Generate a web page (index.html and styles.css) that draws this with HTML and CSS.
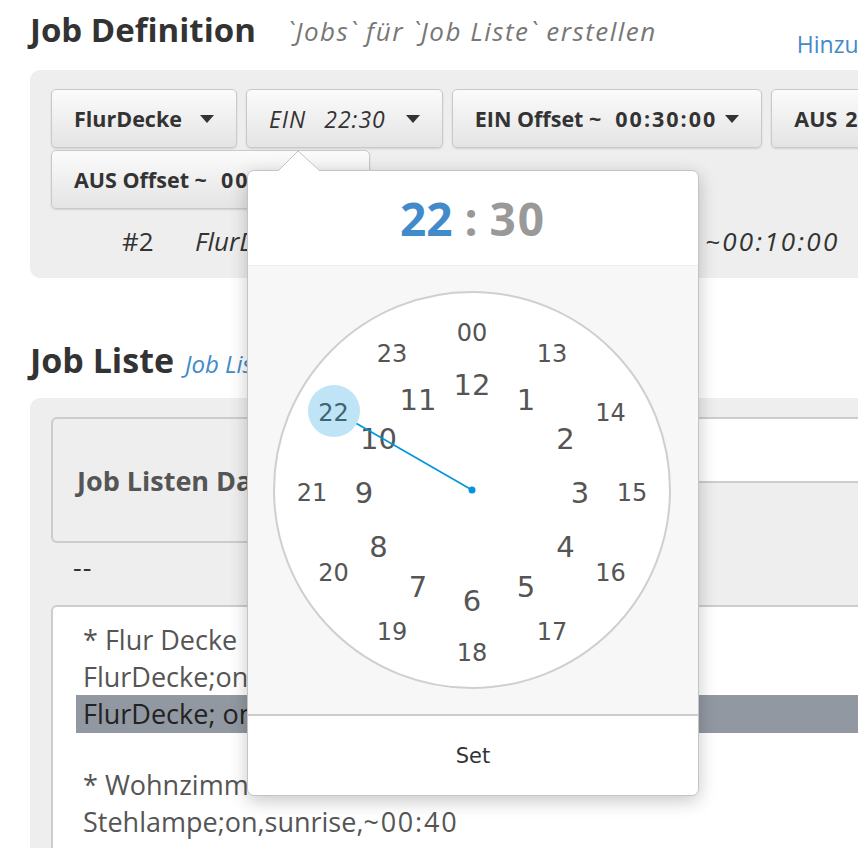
FILE: index.html
```html
<!DOCTYPE html>
<html lang="de">
<head>
<meta charset="utf-8">
<title>Job Definition</title>
<link rel="stylesheet" href="styles.css">
</head>
<body>
<div class="page">
  <div class="head">
    <h1 class="title">Job Definition</h1>
    <span class="subtitle">`Jobs` für `Job Liste` erstellen</span>
    <a class="add">Hinzufügen</a>
  </div>

  <div class="panel def">
    <div class="btns">
      <button class="btn"><span class="lbl">FlurDecke</span><span class="caret"></span></button>
      <button class="btn ital"><span class="lbl">EIN<span class="sp"></span>22:30</span><span class="caret"></span></button>
      <button class="btn tight"><span class="lbl">EIN Offset ~<span class="sp2"></span><span class="dg">00:30:00</span></span><span class="caret"></span></button>
      <button class="btn"><span class="lbl">AUS<span class="sp sm"></span><span class="dg">23:00</span></span><span class="caret"></span></button>
      <button class="btn wide"><span class="lbl">AUS Offset ~<span class="sp2"></span><span class="dg">00:10:00</span></span><span class="caret"></span></button>
    </div>
    <div class="jobline">
      <span class="num">#2</span>
      <span class="job mid">FlurDecke&nbsp;&nbsp; EIN 22:30~00:30:00 &nbsp; AUS 23:00</span>
      <span class="job dg2">~00:10:00</span>
    </div>
  </div>

  <div class="head2">
    <h2 class="title2">Job Liste</h2>
    <span class="sub2">Job Liste bearbeiten</span>
  </div>

  <div class="panel list">
    <div class="filerow">
      <div class="filelabel">Job Listen Datei</div>
      <div class="fileinput"></div>
    </div>
    <div class="dash">--</div>
    <div class="textbox">
      <div class="ln">* Flur Decke</div>
      <div class="ln">FlurDecke;on,22:30,~00:30:00</div>
      <div class="ln sel">FlurDecke; on,22:30,~00:30:00</div>
      <div class="ln blank"></div>
      <div class="ln">* Wohnzimmer</div>
      <div class="ln">Stehlampe;on,sunrise,<span class="dg3">~00:40</span></div>
    </div>
  </div>

  <div class="popover">
    <svg class="arrow" width="44" height="22" viewBox="0 0 44 22">
      <polygon points="1,21 21,1 43,21" fill="#fff"/>
      <polyline points="1,21 21,1 43,21" fill="none" stroke="#c4c4c4" stroke-width="1"/>
    </svg>
    <div class="pop-title"><span class="hh">22</span><span class="colon"> : </span><span class="mm">30</span></div>
    <div class="pop-body">
      <svg class="dial" width="398" height="398" viewBox="0 0 398 398">
        <circle cx="199" cy="199" r="198" fill="#fff" stroke="#cfcfcf" stroke-width="2"/>
        <g class="outer">
          <text x="199" y="42">00</text>
          <text x="279" y="63.4">13</text>
          <text x="337.6" y="122">14</text>
          <text x="359" y="202">15</text>
          <text x="337.6" y="282">16</text>
          <text x="279" y="340.6">17</text>
          <text x="199" y="362">18</text>
          <text x="119" y="340.6">19</text>
          <text x="60.4" y="282">20</text>
          <text x="39" y="202">21</text>
          <text x="60.4" y="122">22</text>
          <text x="119" y="63.4">23</text>
        </g>
        <g class="inner">
          <text x="199" y="94">12</text>
          <text x="253" y="108.5">1</text>
          <text x="292.5" y="148">2</text>
          <text x="307" y="202">3</text>
          <text x="292.5" y="256">4</text>
          <text x="253" y="295.5">5</text>
          <text x="199" y="310">6</text>
          <text x="145" y="295.5">7</text>
          <text x="105.5" y="256">8</text>
          <text x="91" y="202">9</text>
          <text x="105.5" y="148">10</text>
          <text x="145" y="108.5">11</text>
        </g>
        <circle cx="61" cy="120" r="26" fill="rgba(0,149,221,0.25)"/>
        <line x1="199" y1="199" x2="83.5" y2="132.5" stroke="#0095dd" stroke-width="1.6"/>
        <circle cx="199" cy="199" r="3.5" fill="#0095dd"/>
      </svg>
    </div>
    <div class="pop-foot">Set</div>
  </div>
</div>
</body>
</html>
```

FILE: styles.css
```css
html, body {
  margin: 0;
  padding: 0;
  overflow: hidden;
  background: #fff;
}

body {
  font-family: "Open Sans", "Liberation Sans", sans-serif;
  color: #333;
}

.page {
  position: relative;
  width: 1100px;
  padding-left: 30px;
  padding-top: 10px;
}

/* ---------- header ---------- */
.head {
  display: flex;
  align-items: flex-start;
  height: 40px;
  margin-bottom: 20px;
  white-space: nowrap;
}

.title {
  margin: 0;
  font-size: 33px;
  font-weight: 700;
  line-height: 40px;
  color: #333;
}

.subtitle {
  margin-left: 31px;
  font-size: 26px;
  letter-spacing: 1.5px;
  font-style: italic;
  line-height: 40px;
  padding-top: 1px;
  color: #777;
}

.add {
  margin-left: 140px;
  margin-top: 19px;
  font-size: 23px;
  line-height: 30px;
  color: #428bca;
}

/* ---------- panels ---------- */
.panel {
  background: #eeeeee;
  border-radius: 10px;
  padding: 19px 21px 21px;
}

.btns {
  display: flex;
  flex-wrap: wrap;
  column-gap: 9px;
  row-gap: 2px;
}

.btn {
  display: flex;
  align-items: center;
  gap: 18px;
  height: 59px;
  padding: 0 22px;
  border: 1px solid #c9c9c9;
  border-radius: 5px;
  background: linear-gradient(#fbfbfb, #e4e4e4);
  box-shadow: 0 1px 2px rgba(0, 0, 0, 0.12);
  font-family: "Open Sans", "Liberation Sans", sans-serif;
  font-size: 21.5px;
  font-weight: 700;
  color: #333;
  white-space: nowrap;
}

.btn.ital {
  font-style: italic;
  font-weight: 400;
  font-size: 23px;
  letter-spacing: 1px;
  gap: 20px;
}

.btn.ital .sp {
  width: 18px;
}

.btn.tight {
  gap: 8px;
}

.btn.wide {
  width: 319px;
}

.dg {
  letter-spacing: 2px;
}

.sp {
  display: inline-block;
  width: 17px;
}

.sp.sm {
  width: 8px;
}

.sp2 {
  display: inline-block;
  width: 14px;
}

.caret {
  width: 0;
  height: 0;
  border-left: 7.5px solid transparent;
  border-right: 7.5px solid transparent;
  border-top: 8px solid #333;
}

.jobline {
  display: flex;
  align-items: baseline;
  margin-top: 16px;
  padding-left: 71px;
  font-size: 26px;
  line-height: 32px;
  color: #333;
  white-space: nowrap;
}

.jobline .num {
  width: 73px;
}

.jobline .job {
  font-style: italic;
}

.jobline .mid {
  width: 480px;
  margin-right: 30px;
  overflow: hidden;
}

.jobline .dg2 {
  letter-spacing: 2.3px;
}

/* ---------- job liste ---------- */
.head2 {
  display: flex;
  align-items: baseline;
  gap: 11px;
  margin-top: 62px;
  margin-bottom: 18px;
  white-space: nowrap;
}

.title2 {
  margin: 0;
  font-size: 34px;
  font-weight: 700;
  line-height: 40px;
  color: #333;
}

.sub2 {
  font-size: 24px;
  font-style: italic;
  color: #428bca;
}

.panel.list {
  border-radius: 10px 10px 0 0;
  padding-bottom: 40px;
}

.filerow {
  display: flex;
  align-items: flex-start;
}

.filelabel {
  display: flex;
  align-items: center;
  width: 330px;
  height: 122px;
  padding-left: 24px;
  border: 2px solid #cccccc;
  border-right: none;
  border-radius: 6px 0 0 6px;
  background: #eeeeee;
  font-size: 27px;
  font-weight: 700;
  color: #555;
  white-space: nowrap;
}

.fileinput {
  flex: 1;
  height: 62px;
  border: 2px solid #cccccc;
  border-left: none;
  background: #fff;
}

.dash {
  margin: 6px 0 20px 22px;
  font-size: 27px;
  line-height: 36px;
  color: #333;
  letter-spacing: 1px;
}

.textbox {
  background: #fff;
  border: 2px solid #cccccc;
  border-radius: 6px;
  padding: 14px 0 40px 23px;
  font-size: 27px;
  line-height: 37px;
  color: #555;
  white-space: nowrap;
}

.ln {
  padding-left: 7px;
}

.ln.sel {
  background: #9298a1;
  color: #222;
  padding-bottom: 1px;
}

.ln.blank {
  height: 33px;
}

.dg3 {
  letter-spacing: 1.8px;
}

/* ---------- clock popover ---------- */
.popover {
  position: absolute;
  left: 247px;
  top: 170px;
  width: 450px;
  background: #fff;
  border: 1px solid #c4c4c4;
  border-radius: 7px;
  box-shadow: 0 5px 18px rgba(0, 0, 0, 0.22);
}

.arrow {
  position: absolute;
  left: 29px;
  top: -21px;
}

.pop-title {
  display: flex;
  justify-content: center;
  align-items: center;
  height: 94px;
  border-bottom: 1px solid #eeeeee;
  font-family: "Open Sans", "Liberation Sans", sans-serif;
  font-size: 46px;
  font-weight: 700;
  white-space: pre;
}

.hh {
  color: #428bca;
}

.colon,
.mm {
  color: #999;
}

.mm {
  letter-spacing: 2px;
}

.pop-body {
  display: flex;
  justify-content: center;
  padding: 25px 0 25px;
  background: #f7f7f7;
  border-bottom: 2px solid #cccccc;
}

.dial {
  display: block;
  margin-left: -2px;
}

.dial text {
  font-family: "DejaVu Sans", "Liberation Sans", sans-serif;
  fill: #555;
  text-anchor: middle;
  dominant-baseline: central;
}

.outer text {
  font-size: 24px;
}

.inner text {
  font-size: 29px;
}

.pop-foot {
  display: flex;
  justify-content: center;
  align-items: center;
  height: 79px;
  font-family: "DejaVu Sans", "Liberation Sans", sans-serif;
  font-size: 21px;
  color: #333;
}
```
